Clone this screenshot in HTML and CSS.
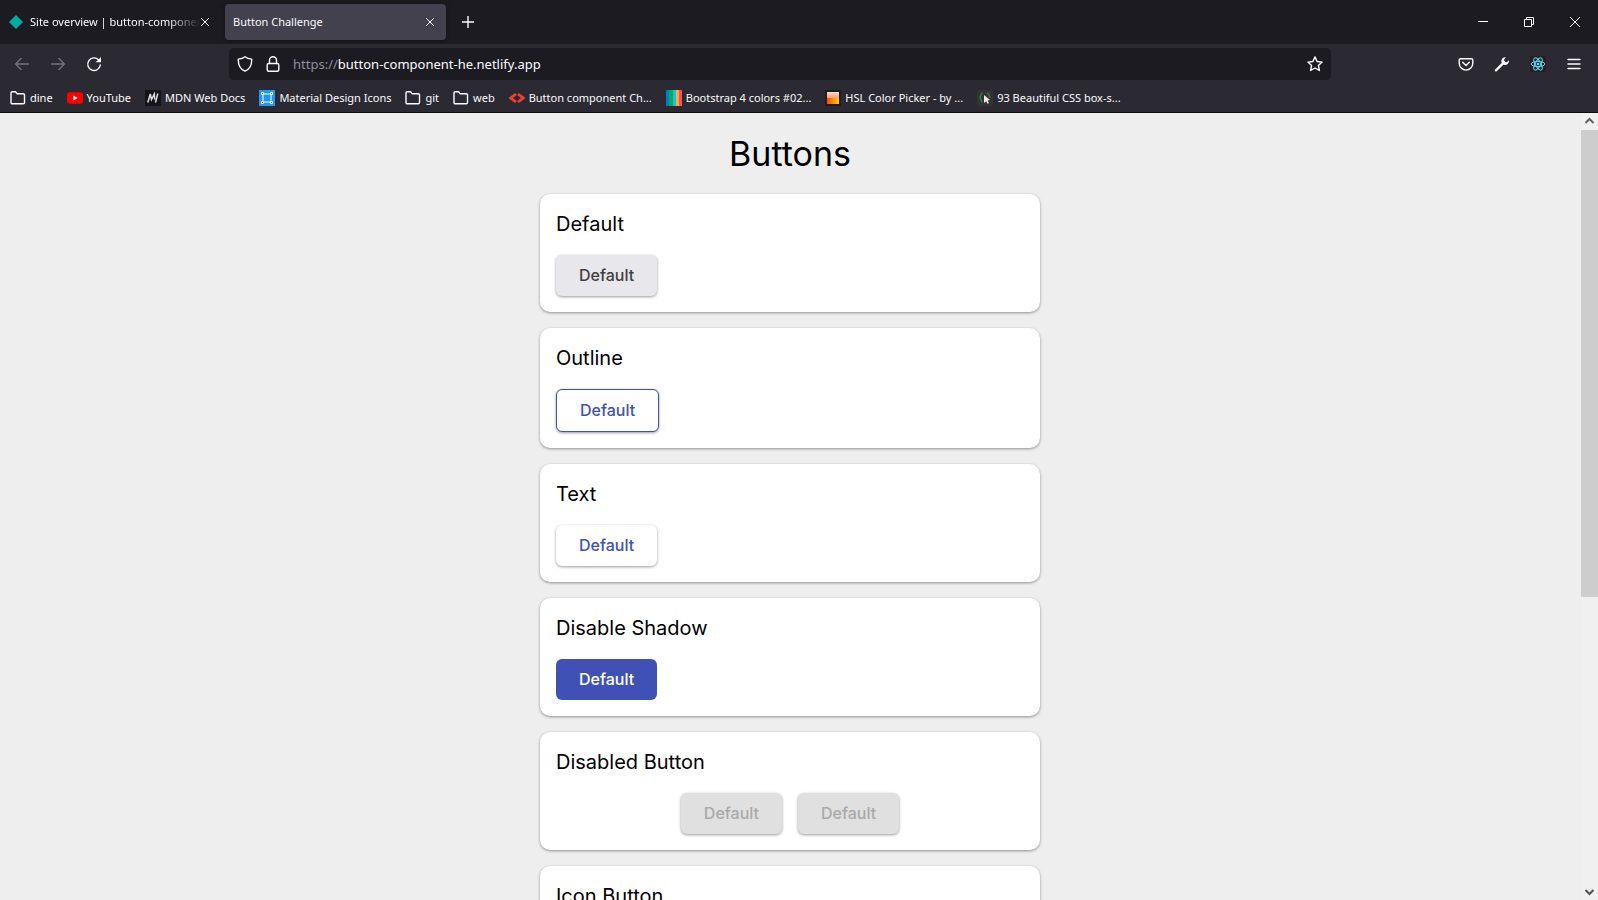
FILE: index.html
```html
<!DOCTYPE html>
<html lang="en">
<head>
<meta charset="utf-8">
<title>Button Challenge</title>
<link rel="stylesheet" href="styles.css">
</head>
<body>
<header class="browser">
  <div class="tabbar">
    <div class="tab">
      <svg class="tab-icon" width="16" height="16" viewBox="0 0 16 16"><path d="M8 1l7 7-7 7-7-7z" fill="#00ad9f"/></svg>
      <span class="tab-label tab-label-fade">Site overview | button-component</span>
      <button class="tab-close" aria-label="Close tab"><svg width="10" height="10" viewBox="0 0 10 10"><path d="M1 1l8 8M9 1L1 9" stroke="#fbfbfe" fill="none"/></svg></button>
    </div>
    <div class="tab tab-active">
      <span class="tab-label">Button Challenge</span>
      <button class="tab-close" aria-label="Close tab"><svg width="10" height="10" viewBox="0 0 10 10"><path d="M1 1l8 8M9 1L1 9" stroke="#fbfbfe" fill="none"/></svg></button>
    </div>
    <button class="new-tab" aria-label="New tab"><svg width="12" height="12" viewBox="0 0 12 12"><path d="M6 0v12M0 6h12" stroke="#fbfbfe" stroke-width="1.4"/></svg></button>
    <div class="window-controls">
      <button aria-label="Minimize"><svg width="10" height="10" viewBox="0 0 10 10"><path d="M0 4.5h10" stroke="#fff"/></svg></button>
      <button aria-label="Restore"><svg width="10" height="10" viewBox="0 0 10 10"><path d="M.5 2.5h7v7h-7zM2.500 2V.5h7v7H8" stroke="#fff" fill="none"/></svg></button>
      <button aria-label="Close"><svg width="10" height="10" viewBox="0 0 10 10"><path d="M0 0l10 10M10 0L0 10" stroke="#fff"/></svg></button>
    </div>
  </div>
  <div class="navbar">
    <div class="nav-buttons">
      <button class="dim" aria-label="Back"><svg width="16" height="16" viewBox="0 0 16 16"><path d="M14.500 8H1.500M7 2.500L1.500 8 7 13.500" class="line"/></svg></button>
      <button class="dim" aria-label="Forward"><svg width="16" height="16" viewBox="0 0 16 16"><path d="M1.500 8h13M9 2.500L14.500 8 9 13.500" class="line"/></svg></button>
      <button aria-label="Reload"><svg width="16" height="16" viewBox="0 0 16 16"><path d="M12.500 3.700A6.300 6.300 0 1 0 14.300 9" class="line"/><path d="M15 1v5.300H9.700z" fill="currentColor"/></svg></button>
    </div>
    <div class="urlbar">
      <svg width="16" height="16" viewBox="0 0 16 16"><path d="M8 .8c2 1.600 4.200 2.100 6.700 2.300.2 5-1.700 10-6.700 12.100C3 13.100 1.100 8.100 1.300 3.100 3.800 2.900 6 2.400 8 .8z" class="line"/></svg>
      <svg width="16" height="16" viewBox="0 0 16 16"><rect x="2.200" y="7.500" width="11.600" height="7.800" rx="1.500" class="line"/><path d="M4.500 7.500V4.200a3.500 3.500 0 0 1 7 0v3.300" class="line"/></svg>
      <span class="url"><span class="scheme">https://</span>button-component-he.netlify.app</span>
      <svg width="16" height="16" viewBox="0 0 16 16"><path d="M8 .9l2.100 4.600 5 .6-3.700 3.400 1 5L8 12l-4.400 2.500 1-5L.9 6.100l5-.6z" class="line"/></svg>
    </div>
    <div class="nav-tools">
      <button aria-label="Save to Pocket"><svg width="16" height="16" viewBox="0 0 16 16"><path d="M2.500 2.700h11c.8 0 1.300.5 1.300 1.300v3.300a6.800 6.800 0 0 1-13.600 0V4c0-.8.500-1.300 1.300-1.300z" class="line"/><path d="M4.700 6.300L8 9.500l3.300-3.200" class="line"/></svg></button>
      <button aria-label="Developer tools"><svg width="16" height="16" viewBox="0 0 16 16"><path d="M2 14.300L10 6.300" stroke="currentColor" stroke-width="2.400" stroke-linecap="round"/><path d="M11.800 1.200a4 4 0 0 0-4.300 5.200l2.300 2.300a4 4 0 0 0 5.200-4.400l-2.300 1.900-2-.4-.7-2z" fill="currentColor"/></svg></button>
      <button aria-label="React tools"><svg width="16" height="16" viewBox="0 0 16 16"><path d="M0 0h16v16H0z" fill="#222"/><g fill="none" stroke="#61dafb"><ellipse cx="8" cy="8" rx="6.800" ry="2.700"/><ellipse cx="8" cy="8" rx="6.800" ry="2.700" transform="rotate(60 8 8)"/><ellipse cx="8" cy="8" rx="6.800" ry="2.700" transform="rotate(120 8 8)"/></g><circle cx="8" cy="8" r="1.300" fill="#61dafb"/></svg></button>
      <button aria-label="Menu"><svg width="16" height="16" viewBox="0 0 16 16"><path d="M2 3.500h12M2 8h12M2 12.500h12" class="line"/></svg></button>
    </div>
  </div>
  <nav class="bookmarks">
    <a href="#"><svg width="16" height="16" viewBox="0 0 16 16"><path d="M1 12.500V3c0-.8.500-1.300 1.300-1.300h3.200l1.700 2h6c.8 0 1.300.5 1.300 1.300v7.500c0 .8-.5 1.300-1.300 1.300H2.300C1.500 13.800 1 13.300 1 12.500z" class="line"/></svg>dine</a>
    <a href="#"><svg width="16" height="16" viewBox="0 0 16 16"><rect y="2.300" width="16" height="11.400" rx="3" fill="#f00"/><path d="M6.400 5.600v4.800L10.600 8z" fill="#fff"/></svg>YouTube</a>
    <a href="#"><svg width="16" height="16" viewBox="0 0 16 16"><path d="M0 0h16v16H0z" fill="#15141a"/><path d="M2.800 12.500L5.300 4l1.200 5.500L9.300 4l.4 5.500M12.800 3.500L10.500 12.500" stroke="#ddd" stroke-width="1.500" fill="none"/></svg>MDN Web Docs</a>
    <a href="#"><svg width="16" height="16" viewBox="0 0 16 16"><path d="M0 0h16v16H0z" fill="#2196f3"/><path d="M4 4h8v8H4z" fill="none" stroke="#fff"/><g fill="#2196f3" stroke="#fff"><path d="M2.500 2.500h2v2h-2zM11.500 2.500h2v2h-2zM2.500 11.500h2v2h-2zM11.500 11.500h2v2h-2z"/></g></svg>Material Design Icons</a>
    <a href="#"><svg width="16" height="16" viewBox="0 0 16 16"><path d="M1 12.500V3c0-.8.500-1.300 1.300-1.300h3.200l1.700 2h6c.8 0 1.300.5 1.300 1.300v7.500c0 .8-.5 1.300-1.300 1.300H2.300C1.500 13.800 1 13.300 1 12.500z" class="line"/></svg>git</a>
    <a href="#"><svg width="16" height="16" viewBox="0 0 16 16"><path d="M1 12.500V3c0-.8.500-1.300 1.300-1.300h3.200l1.700 2h6c.8 0 1.300.5 1.300 1.300v7.500c0 .8-.5 1.300-1.300 1.300H2.300C1.500 13.800 1 13.300 1 12.500z" class="line"/></svg>web</a>
    <a href="#"><svg width="16" height="16" viewBox="0 0 16 16"><path d="M7 4L1.800 8 7 12M9 4l5.200 4L9 12" fill="none" stroke="#f0402f" stroke-width="2.800"/></svg>Button component Ch...</a>
    <a href="#"><svg width="16" height="16" viewBox="0 0 16 16"><path d="M0 0h3v16H0z" fill="#0275d8"/><path d="M3 0h4v16H3z" fill="#00b050"/><path d="M7 0h3v16H7z" fill="#1cc0e0"/><path d="M10 0h3v16h-3z" fill="#ffad46"/><path d="M13 0h3v16h-3z" fill="#ff5148"/></svg>Bootstrap 4 colors #02...</a>
    <a href="#"><svg width="16" height="16" viewBox="0 0 16 16"><defs><linearGradient id="top" x1="0" y1="0" x2="0" y2="1"><stop stop-color="#ffd9cc"/><stop offset="1" stop-color="#ff9c80"/></linearGradient><linearGradient id="bottom"><stop stop-color="#ff4a00"/><stop offset="1" stop-color="#ffd000"/></linearGradient></defs><path d="M0 0h16v16H0z" fill="#1d1d1d"/><path d="M2 2h12v6H2z" fill="url(#top)"/><path d="M2 8h12v6H2z" fill="url(#bottom)"/></svg>HSL Color Picker - by ...</a>
    <a href="#"><svg width="16" height="16" viewBox="0 0 16 16"><rect width="16" height="16" rx="2" fill="#333"/><path d="M5.500 3C3.500 3 4.500 7 2.500 7.500c2 .5 1 4.500 3 4.500M10 3c3 0 1 4 3.500 4.500" fill="none" stroke="#2e7d4f" stroke-width="1.500"/><path d="M7 5l6 5-2.500.5 1.500 2.500-1.500.8-1.300-2.500L7 13z" fill="#eee"/></svg>93 Beautiful CSS box-s...</a>
  </nav>
</header>
<div class="viewport">
  <main class="page">
    <h1>Buttons</h1>
    <section class="card"><h2>Default</h2><div class="row"><button class="btn">Default</button></div></section>
    <section class="card"><h2>Outline</h2><div class="row"><button class="btn btn-outline">Default</button></div></section>
    <section class="card"><h2>Text</h2><div class="row"><button class="btn btn-text">Default</button></div></section>
    <section class="card"><h2>Disable Shadow</h2><div class="row"><button class="btn btn-flat">Default</button></div></section>
    <section class="card"><h2>Disabled Button</h2><div class="row row-center"><button class="btn" disabled>Default</button><button class="btn" disabled>Default</button></div></section>
    <section class="card"><h2>Icon Button</h2></section>
  </main>
  <div class="scrollbar">
    <svg width="17" height="17" viewBox="0 0 17 17"><path d="M4.500 10l4-4 4 4" fill="none" stroke="#606060" stroke-width="2"/></svg>
    <div class="track"><div class="thumb"></div></div>
    <svg width="17" height="17" viewBox="0 0 17 17"><path d="M4.500 7l4 4 4-4" fill="none" stroke="#505050" stroke-width="2"/></svg>
  </div>
</div>
</body>
</html>
```

FILE: styles.css
```css
* { box-sizing: border-box; }
body {
  margin: 0;
  height: 100vh;
  display: flex;
  flex-direction: column;
  overflow: hidden;
  background: #eee;
  font-family: Inter, sans-serif;
}
button { font: inherit; color: inherit; border: 0; background: none; padding: 0; }
svg { display: block; flex: none; }
.line { fill: none; stroke: currentColor; stroke-width: 1.4; stroke-linejoin: round; stroke-linecap: round; }

.browser {
  flex: none;
  background: #2b2a33;
  border-bottom: 1px solid #0c0c0d;
  color: #fbfbfe;
  font: 11px/16px "Noto Sans", sans-serif;
}
.tabbar { display: flex; align-items: center; height: 44px; background: #1c1b22; }
.tab { display: flex; align-items: center; width: 225px; height: 36px; padding: 0 11px 0 8px; }
.tab-icon { margin-right: 6px; }
.tab-label { flex: 1; min-width: 0; overflow: hidden; white-space: nowrap; }
.tab-label-fade { mask-image: linear-gradient(to left, transparent, #000 32px); }
.tab:first-child { padding-right: 15px; }
.tab-active { width: 221px; border-radius: 4px; background: #42414d; box-shadow: 0 0 4px rgba(0, 0, 0, .4); }
.tab-close { display: grid; place-items: center; width: 10px; height: 16px; }
.new-tab { display: grid; place-items: center; width: 43px; height: 36px; }
.window-controls { display: flex; margin-left: auto; }
.window-controls button { display: grid; place-items: center; width: 46px; height: 44px; }

.navbar { display: flex; align-items: center; height: 40px; }
.nav-buttons { display: flex; gap: 20px; width: 229px; padding-left: 14px; }
.dim { color: #75747b; }
.urlbar {
  flex: 1;
  display: flex;
  align-items: center;
  gap: 12px;
  height: 32px;
  padding: 0 8px;
  border-radius: 4px;
  background: #1c1b22;
}
.url { flex: 1; font-size: 13px; line-height: 20px; }
.scheme { color: #8f8f9d; }
.nav-tools { display: flex; justify-content: flex-end; gap: 20px; width: 267px; padding-right: 16px; }

.bookmarks { display: flex; align-items: center; gap: 14px; height: 28px; padding-left: 10px; }
.bookmarks a { display: flex; align-items: center; gap: 4px; color: inherit; text-decoration: none; white-space: nowrap; }

.viewport { flex: 1; min-height: 0; display: flex; }
.page {
  flex: 1;
  overflow: hidden;
  display: flex;
  flex-direction: column;
  align-items: center;
  gap: 16px;
  padding: 17px 1px 0 0;
}
h1, h2 { margin: 0; font-weight: 400; color: #000; }
h1 { font-size: 34px; line-height: 48px; }
h2 { font-size: 20px; line-height: 30px; }
.card {
  flex: none;
  display: flex;
  flex-direction: column;
  gap: 16px;
  width: 100%;
  max-width: 500px;
  padding: 15px 16px 16px;
  border-radius: 10px;
  background: #fff;
  box-shadow: 0 1px 3px rgba(0, 0, 0, .4);
}
.row { display: flex; gap: 16px; }
.row-center { justify-content: center; }
.btn {
  padding: 8px 23px 9px;
  border-radius: 6px;
  background: #e8e7ec;
  color: #3f3f3f;
  font-size: 16px;
  line-height: 24px;
  font-weight: 500;
  box-shadow: 0 1px 3px rgba(0, 0, 0, .4);
}
.btn-outline { border: 1px solid #3f51b5; background: #fff; color: #3f51b5; }
.btn-text { background: #fff; color: #3f51b5; }
.btn-flat { background: #3f51b5; color: #fff; box-shadow: none; }
.btn:disabled { background: #e0e0e0; color: #a9a9a9; }

.scrollbar { flex: none; width: 17px; display: flex; flex-direction: column; background: #f0f0f0; }
.track { flex: 1; }
.thumb { height: 62%; background: #cdcdcd; }
```
